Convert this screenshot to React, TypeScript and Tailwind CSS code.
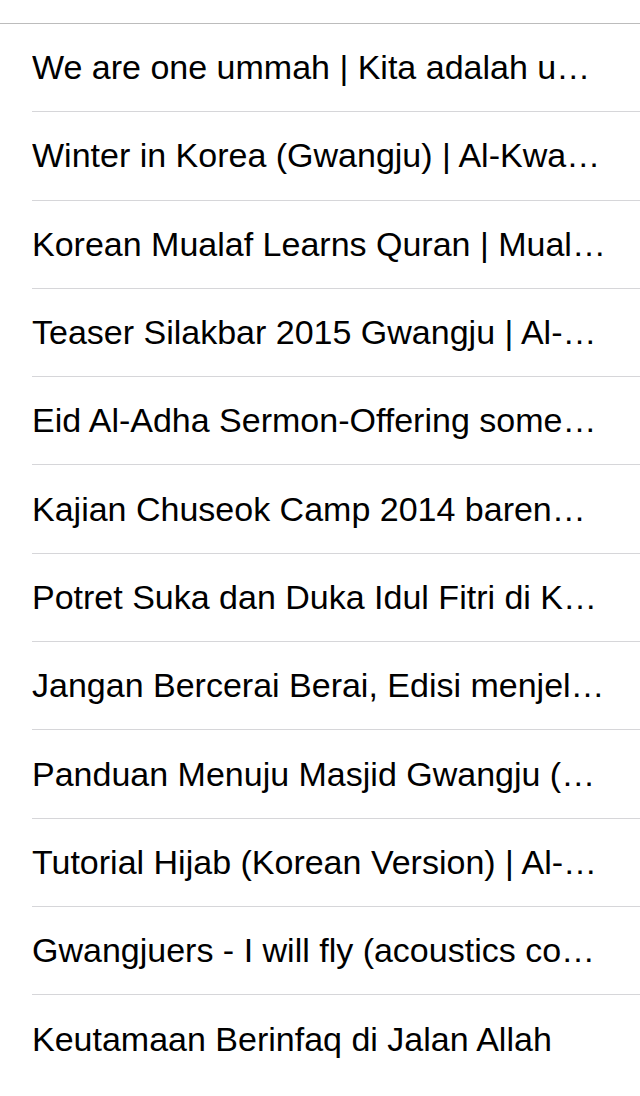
const titles = [
  "We are one ummah | Kita adalah u…",
  "Winter in Korea (Gwangju) | Al-Kwa…",
  "Korean Mualaf Learns Quran | Mual…",
  "Teaser Silakbar 2015 Gwangju | Al-…",
  "Eid Al-Adha Sermon-Offering some…",
  "Kajian Chuseok Camp 2014 baren…",
  "Potret Suka dan Duka Idul Fitri di K…",
  "Jangan Bercerai Berai, Edisi menjel…",
  "Panduan Menuju Masjid Gwangju (…",
  "Tutorial Hijab (Korean Version) | Al-…",
  "Gwangjuers - I will fly (acoustics co…",
  "Keutamaan Berinfaq di Jalan Allah",
];

export default function App() {
  return (
    <div className="w-[640px] h-[1096px] bg-white overflow-hidden font-['Liberation_Sans',Arial,sans-serif]">
      <div className="h-[24px] border-b border-[#bcbcbc]" />
      <ul>
        {titles.map((t, i) => (
          <li key={i} className="pl-8">
            <div
              className={`h-[88.3px] flex items-center pr-6 text-[34px] text-black whitespace-nowrap overflow-hidden ${
                i < titles.length - 1 ? "border-b border-[#d6d6d9]" : ""
              }`}
            >
              {t}
            </div>
          </li>
        ))}
      </ul>
    </div>
  );
}
